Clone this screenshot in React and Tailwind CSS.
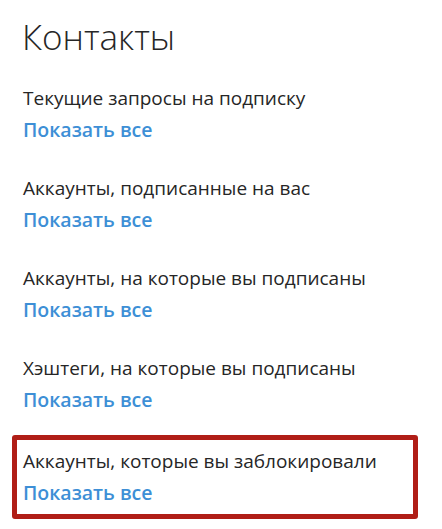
export default function App() {
  const items = [
    "Текущие запросы на подписку",
    "Аккаунты, подписанные на вас",
    "Аккаунты, на которые вы подписаны",
    "Хэштеги, на которые вы подписаны",
  ];

  return (
    <div className="w-[442px] h-[529px] bg-white overflow-hidden font-['Open_Sans',sans-serif] text-[#262626]">
      <h1 className="pl-[22px] pt-[13px] text-[35px] font-light leading-[48px]">Контакты</h1>

      <div className="mt-[24px] flex flex-col">
        {items.map((label) => (
          <div key={label} className="pl-[23px] h-[90px]">
            <p className="text-[19px] leading-[26px]">{label}</p>
            <a href="#" className="block text-[19.5px] leading-[38px] font-semibold text-[#3d8fd6]">
              Показать все
            </a>
          </div>
        ))}

        <div className="ml-[12px] w-[406px] h-[84px] -mt-[10px] border-[5px] border-[#b01e17] rounded-[3px] pl-[6px] pt-[8px]">
          <p className="text-[19px] leading-[26px]">Аккаунты, которые вы заблокировали</p>
          <a href="#" className="block text-[19.5px] leading-[38px] font-semibold text-[#3d8fd6]">
            Показать все
          </a>
        </div>
      </div>
    </div>
  );
}
